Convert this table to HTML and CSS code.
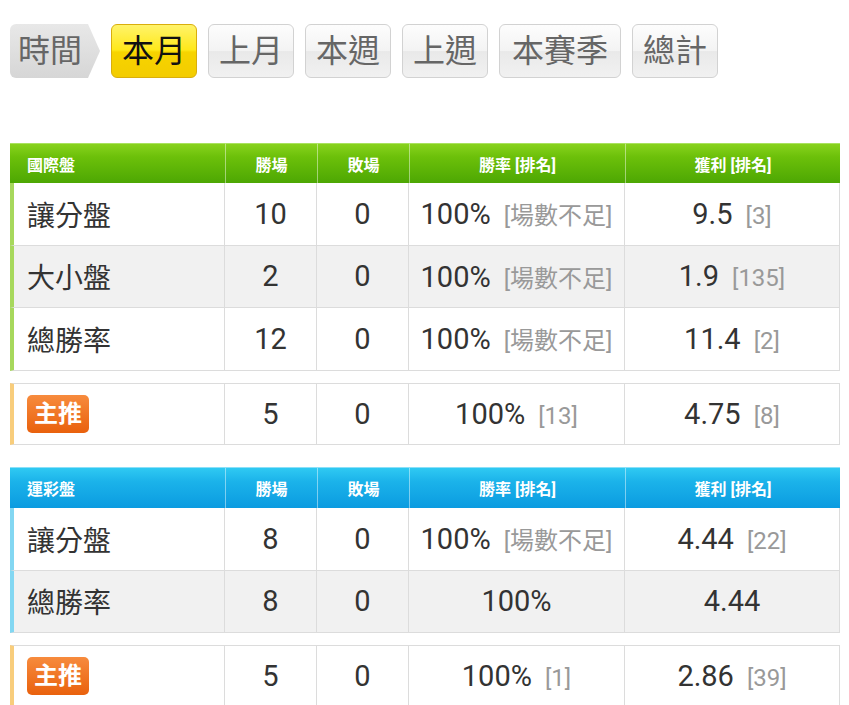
FILE: index.html
```html
<!DOCTYPE html>
<html lang="zh-Hant">
<head>
<meta charset="utf-8">
<link rel="stylesheet" href="styles.css">
</head>
<body>
<div class="page">
  <div class="tabs">
    <div class="tab-label">時間</div>
    <div class="tab active">本月</div>
    <div class="tab">上月</div>
    <div class="tab">本週</div>
    <div class="tab">上週</div>
    <div class="tab wide">本賽季</div>
    <div class="tab">總計</div>
  </div>

  <table class="stats green">
    <colgroup><col class="c1"><col class="c2"><col class="c3"><col class="c4"><col class="c5"></colgroup>
    <thead>
      <tr><th class="first">國際盤</th><th>勝場</th><th>敗場</th><th>勝率 [排名]</th><th>獲利 [排名]</th></tr>
    </thead>
    <tbody>
      <tr><td class="label">讓分盤</td><td>10</td><td>0</td><td>100%<span class="rank">[場數不足]</span></td><td>9.5<span class="rank">[3]</span></td></tr>
      <tr class="alt"><td class="label">大小盤</td><td>2</td><td>0</td><td>100%<span class="rank">[場數不足]</span></td><td>1.9<span class="rank">[135]</span></td></tr>
      <tr><td class="label">總勝率</td><td>12</td><td>0</td><td>100%<span class="rank">[場數不足]</span></td><td>11.4<span class="rank">[2]</span></td></tr>
    </tbody>
  </table>
  <table class="stats pick">
    <colgroup><col class="c1"><col class="c2"><col class="c3"><col class="c4"><col class="c5"></colgroup>
    <tbody>
      <tr><td class="label"><span class="badge">主推</span></td><td>5</td><td>0</td><td>100%<span class="rank">[13]</span></td><td>4.75<span class="rank">[8]</span></td></tr>
    </tbody>
  </table>

  <table class="stats blue">
    <colgroup><col class="c1"><col class="c2"><col class="c3"><col class="c4"><col class="c5"></colgroup>
    <thead>
      <tr><th class="first">運彩盤</th><th>勝場</th><th>敗場</th><th>勝率 [排名]</th><th>獲利 [排名]</th></tr>
    </thead>
    <tbody>
      <tr><td class="label">讓分盤</td><td>8</td><td>0</td><td>100%<span class="rank">[場數不足]</span></td><td>4.44<span class="rank">[22]</span></td></tr>
      <tr class="alt"><td class="label">總勝率</td><td>8</td><td>0</td><td>100%</td><td>4.44</td></tr>
    </tbody>
  </table>
  <table class="stats pick">
    <colgroup><col class="c1"><col class="c2"><col class="c3"><col class="c4"><col class="c5"></colgroup>
    <tbody>
      <tr><td class="label"><span class="badge">主推</span></td><td>5</td><td>0</td><td>100%<span class="rank">[1]</span></td><td>2.86<span class="rank">[39]</span></td></tr>
    </tbody>
  </table>
</div>
</body>
</html>
```
FILE: styles.css
```css
* { box-sizing: border-box; }
html, body { margin: 0; padding: 0; background: #fff; }
body {
  font-family: Roboto, "Noto Sans CJK TC", sans-serif;
  color: #333;
}
.page { padding: 24px 9px 0 10px; }

.tabs {
  display: flex;
  gap: 11px;
  height: 54px;
  margin-bottom: 65px;
}
.tab-label, .tab {
  height: 54px;
  display: flex;
  align-items: center;
  justify-content: center;
  font-size: 32px;
  line-height: 1;
  color: #666;
}
.tab-label {
  width: 90px;
  padding-right: 10px;
  border-radius: 6px 0 0 6px;
  background: linear-gradient(#e8e8e8, #d6d6d6);
  clip-path: polygon(0 0, calc(100% - 12px) 0, 100% 50%, calc(100% - 12px) 100%, 0 100%);
}
.tab {
  padding: 0 10px;
  border: 1px solid #d2d2d2;
  border-radius: 6px;
  background: linear-gradient(#fdfdfd 0%, #f3f3f3 50%, #e9e9e9 51%, #f1f1f1 100%);
}
.tab.wide { padding: 0 12px; }
.tab.active {
  color: #111;
  border-color: #d9ae0c;
  background: linear-gradient(#fff36a 0%, #ffe81a 48%, #f7d400 52%, #f3cc00 100%);
}

.stats {
  width: 830px;
  border-collapse: separate;
  border-spacing: 0;
  table-layout: fixed;
}
.c1 { width: 215px; }
.c2 { width: 92px; }
.c3 { width: 92px; }
.c4 { width: 216px; }
.c5 { width: 215px; }

.stats th {
  height: 40px;
  color: #fff;
  font-size: 16px;
  font-weight: 700;
  text-align: center;
  padding: 0;
  border-left: 1px solid rgba(255, 255, 255, 0.45);
}
.stats th.first {
  text-align: left;
  padding-left: 17px;
  border-left: none;
}
.green thead tr {
  background: linear-gradient(#8ad41e 0%, #6cc00a 35%, #4da703 100%);
}
.green th { border-top: 1px solid #a9e25e; }
.blue thead tr {
  background: linear-gradient(#31cbf3 0%, #1bb3ea 35%, #0b9be0 100%);
}
.blue th { border-top: 1px solid #8be0f8; height: 41px; }

.stats td {
  height: 62.5px;
  padding: 0;
  border-right: 1px solid #dcdcdc;
  border-bottom: 1px solid #dcdcdc;
  text-align: center;
  font-size: 29px;
  color: #333;
  white-space: nowrap;
}
.pick td { border-top: 1px solid #dcdcdc; }
.stats tr.alt td { background: #f1f1f1; }
.stats td.label {
  text-align: left;
  padding-left: 13px;
  font-size: 28px;
  border-left: 4px solid #a7d85c;
}
.blue td.label { border-left-color: #83d7f2; }
.pick td.label { border-left-color: #f8cd7c; }
.rank {
  font-size: 24px;
  color: #999;
  margin-left: 13px;
}

.pick { margin-top: 12px; }
.pick + .stats { margin-top: 22px; }

.badge {
  display: inline-block;
  width: 62px;
  height: 38px;
  line-height: 38px;
  text-align: center;
  border-radius: 5px;
  background: linear-gradient(#f78b3d, #e9610d);
  color: #fff;
  font-size: 24px;
  font-weight: 700;
  vertical-align: middle;
}
```
